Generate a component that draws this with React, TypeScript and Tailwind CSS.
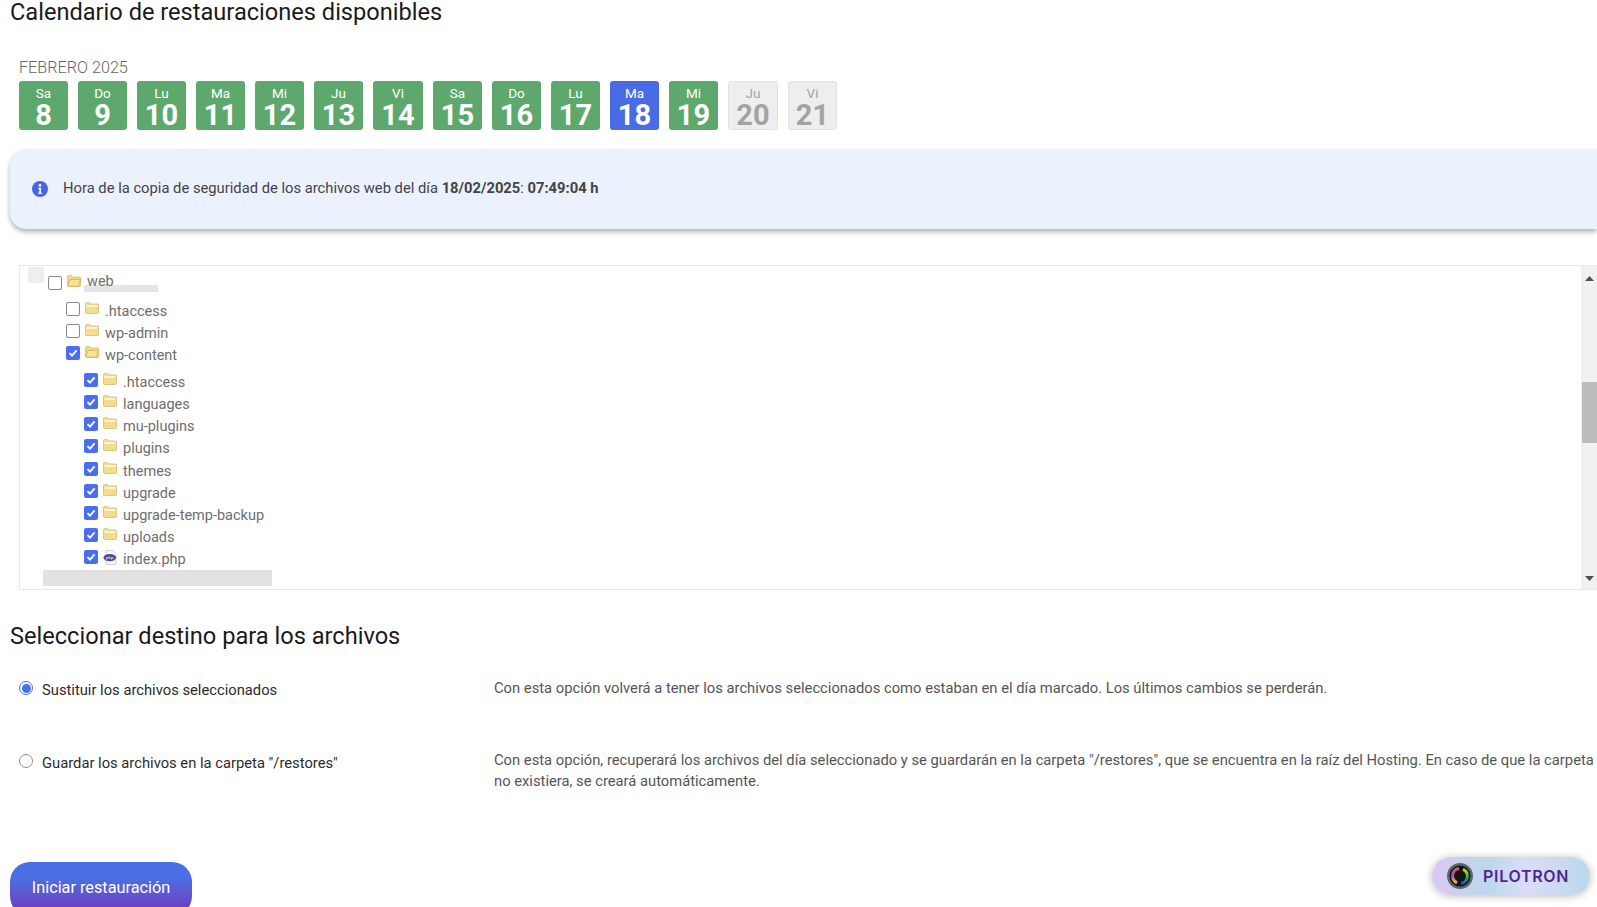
import React from "react";

const days: [string, number, "g" | "b" | "d"][] = [
  ["Sa", 8, "g"], ["Do", 9, "g"], ["Lu", 10, "g"], ["Ma", 11, "g"], ["Mi", 12, "g"], ["Ju", 13, "g"], ["Vi", 14, "g"],
  ["Sa", 15, "g"], ["Do", 16, "g"], ["Lu", 17, "g"], ["Ma", 18, "b"], ["Mi", 19, "g"], ["Ju", 20, "d"], ["Vi", 21, "d"],
];

function Day({ d, n, k, wide }: { d: string; n: number; k: "g" | "b" | "d"; wide?: boolean }) {
  const cls =
    k === "g"
      ? "bg-[#5ea86d] text-white"
      : k === "b"
      ? "bg-[#4a6be6] text-white"
      : "bg-[#eeeeee] text-[#a3a3a3] border border-[#e2e2e2]";
  return (
    <div className={`${wide ? "w-[50px]" : "w-[49px]"} h-[49px] shrink-0 rounded-[3px] flex flex-col items-center ${cls}`}>
      <span className={`text-[13.5px] leading-[15px] ${k === "d" ? "mt-[4px]" : "mt-[5px]"}`}>{d}</span>
      <span className="text-[29px] leading-[29px] font-bold">{n}</span>
    </div>
  );
}

function Folder({ open }: { open?: boolean }) {
  return (
    <svg width="14" height="12" viewBox="0 0 14 12" className="shrink-0">
      <path d="M.5 10.5V1.6c0-.6.4-1 1-1h3.2l1.2 1.4h6.6c.6 0 1 .4 1 1v7.5c0 .6-.4 1-1 1h-11c-.6 0-1-.4-1-1z" fill="#f3dc8c" stroke="#d6bd74" strokeWidth=".8" />
      {open ? (
        <path d="M.8 10.8 3 4.4h10.6l-2.2 6.8H1.4z" fill="#f8e294" stroke="#c9a95a" strokeWidth=".7" />
      ) : (
        <rect x="1.6" y="3.2" width="10.8" height="1.6" fill="#fffbe9" />
      )}
    </svg>
  );
}

function PhpIcon() {
  return (
    <svg width="15" height="15" viewBox="0 0 15 15" className="shrink-0">
      <path d="M3 .5h7l3 3v11H3z" fill="#f7f7fb" stroke="#c9c9d6" strokeWidth=".8" />
      <ellipse cx="6.8" cy="7.6" rx="6.3" ry="3.6" fill="#4f4a8c" />
      <text x="6.8" y="9.2" fontSize="4.4" textAnchor="middle" fill="#ffffff" fontFamily="Roboto, sans-serif">php</text>
    </svg>
  );
}

function Check({ on }: { on?: boolean }) {
  return on ? (
    <span className="w-[14px] h-[14px] shrink-0 rounded-[2px] bg-[#4a6ef0] flex items-center justify-center">
      <svg width="10" height="10" viewBox="0 0 10 10">
        <path d="M1.5 5.2 4 7.6 8.6 2.4" fill="none" stroke="#fff" strokeWidth="1.8" />
      </svg>
    </span>
  ) : (
    <span className="w-[14px] h-[14px] shrink-0 rounded-[2px] bg-white border border-[#8a8a8a]" />
  );
}

function Row({ label, pad, mt, on, icon, open, up }: { label: string; pad: string; mt: string; on?: boolean; icon?: "php"; open?: boolean; up?: boolean }) {
  return (
    <div className={`flex items-start h-[22.15px] ${pad} ${mt}`}>
      <span className={`shrink-0 flex ${up ? "" : "-mt-[1px]"}`}>
        <Check on={on} />
      </span>
      <span className="w-[5px] shrink-0" />
      <span className="w-[14px] shrink-0 -mt-[1px]">{icon === "php" ? <PhpIcon /> : <Folder open={open} />}</span>
      <span className={`ml-[6px] text-[14.5px] leading-[18px] text-[#6e6e6e] ${up ? "-mt-[3px]" : "mt-0"}`}>{label}</span>
    </div>
  );
}

export default function App() {
  return (
    <div className="relative w-[1597px] h-[907px] overflow-hidden bg-white font-['Roboto',sans-serif]">
      <h2 className="pl-[10px] text-[23.6px] leading-[24px] text-[#1a1a1a]">Calendario de restauraciones disponibles</h2>

      <div className="pl-[19px] mt-[34px]">
        <div className="text-[16.2px] leading-[20px] pb-[3px] font-light text-[#666666]">FEBRERO 2025</div>
        <div className="flex gap-x-[10px]">
          {days.map(([d, n, k], i) => (
            <Day key={i} d={d} n={n} k={k} wide={i === 6 || i === 12} />
          ))}
        </div>
      </div>

      <div className="ml-[10px] mt-[19px] h-[80px] rounded-l-[16px] bg-[#ecf2fd] shadow-[0_3px_5px_rgba(0,0,0,0.3)] flex items-center pl-[22px] text-[14.76px] text-[#444444]">
        <svg width="16" height="16" viewBox="0 0 16 16" className="shrink-0">
          <circle cx="8" cy="8" r="8" fill="#4a64e6" />
          <circle cx="8" cy="4.4" r="1.4" fill="#fff" />
          <path d="M6.3 6.8h2.7v5h1.1v1.3H6.1v-1.3h1.2V8.1h-1z" fill="#fff" />
        </svg>
        <span className="ml-[15px] -mt-[2px]">
          Hora de la copia de seguridad de los archivos web del día <b className="font-bold">18/02/2025</b>: <b className="font-bold">07:49:04 h</b>
        </span>
      </div>

      <div className="relative ml-[19px] w-[1579px] mt-[36px] h-[325px] border border-[#e8e8e8] bg-white overflow-hidden flex">
        <div className="flex-1 relative">
          <div className="absolute left-[8px] top-[1px] w-[16px] h-[16px] bg-[#eeeeee]" />
          <div className="absolute left-[64px] top-[19px] w-[74px] h-[7px] bg-[#e5e5e5]" />
          <div className="absolute left-[23px] top-[304px] w-[229px] h-[16px] bg-[#e2e2e2]" />
          <div className="pt-[10px] relative">
            <Row label="web" pad="pl-[28px]" mt="" open up />
            <Row label=".htaccess" pad="pl-[46px]" mt="mt-[5px]" />
            <Row label="wp-admin" pad="pl-[46px]" mt="" />
            <Row label="wp-content" pad="pl-[46px]" mt="" on open />
            <Row label=".htaccess" pad="pl-[64px]" mt="mt-[4.5px]" on />
            <Row label="languages" pad="pl-[64px]" mt="" on />
            <Row label="mu-plugins" pad="pl-[64px]" mt="" on />
            <Row label="plugins" pad="pl-[64px]" mt="" on />
            <Row label="themes" pad="pl-[64px]" mt="" on />
            <Row label="upgrade" pad="pl-[64px]" mt="" on />
            <Row label="upgrade-temp-backup" pad="pl-[64px]" mt="" on />
            <Row label="uploads" pad="pl-[64px]" mt="" on />
            <Row label="index.php" pad="pl-[64px]" mt="" on icon="php" />
          </div>
        </div>
        <div className="w-[16px] bg-[#f1f1f1] flex flex-col items-center justify-between pt-[10px] pb-[8px] relative">
          <svg width="9" height="5" viewBox="0 0 9 5"><path d="M4.5 0 9 5H0z" fill="#505050" /></svg>
          <div className="absolute left-[1px] top-[116px] w-[15px] h-[61px] bg-[#bcbcbc]" />
          <svg width="9" height="5" viewBox="0 0 9 5"><path d="M4.5 5 9 0H0z" fill="#505050" /></svg>
        </div>
      </div>

      <h2 className="pl-[10px] mt-[34px] text-[23.6px] leading-[24px] text-[#1a1a1a]">Seleccionar destino para los archivos</h2>

      <div className="mt-[32px] flex pl-[19px] h-[73px]">
        <div className="w-[475px] flex items-start shrink-0">
          <span className="mt-[1px] w-[14px] h-[14px] rounded-full border border-[#4a6ef0] flex items-center justify-center shrink-0">
            <span className="w-[9px] h-[9px] rounded-full bg-[#4a6ef0]" />
          </span>
          <span className="ml-[9px] text-[14.76px] leading-[21px] text-[#2b2b2b]">Sustituir los archivos seleccionados</span>
        </div>
        <p className="-mt-[2px] text-[14.76px] leading-[21px] text-[#555555]">Con esta opción volverá a tener los archivos seleccionados como estaban en el día marcado. Los últimos cambios se perderán.</p>
      </div>

      <div className="flex pl-[19px]">
        <div className="w-[475px] flex items-start shrink-0">
          <span className="mt-[1px] w-[14px] h-[14px] rounded-full border border-[#8f8f8f] bg-white shrink-0" />
          <span className="ml-[9px] text-[14.76px] leading-[21px] text-[#2b2b2b]">Guardar los archivos en la carpeta "/restores"</span>
        </div>
        <p className="-mt-[3px] w-[1100px] shrink-0 text-[14.76px] leading-[21px] text-[#555555]">
          Con esta opción, recuperará los archivos del día seleccionado y se guardarán en la carpeta "/restores", que se encuentra en la raíz del Hosting. En caso de que la carpeta no existiera, se creará automáticamente.
        </p>
      </div>

      <button className="block ml-[10px] mt-[70px] w-[182px] h-[54px] pb-[3px] rounded-[20px] bg-gradient-to-b from-[#4a6ee4] from-[30%] to-[#6a3fc0] to-[85%] text-white text-[16.25px] leading-[24px] text-center">
        Iniciar restauración
      </button>

      <div className="absolute left-[1432px] top-[857px] w-[158px] h-[38px] rounded-[19px] bg-[linear-gradient(90deg,#dcc8f2_0%,#bcd8ec_35%,#dcdcf6_60%,#b9d9ec_100%)] shadow-[0_1px_8px_rgba(0,0,0,0.28)] flex items-center pl-[15px]">
        <svg width="26" height="26" viewBox="0 0 26 26" className="shrink-0">
          <defs>
            <linearGradient id="ringL" x1="0" y1="0" x2="0" y2="1">
              <stop offset="0" stopColor="#e8554a" />
              <stop offset=".5" stopColor="#9c4fc4" />
              <stop offset="1" stopColor="#e8c62c" />
            </linearGradient>
            <linearGradient id="ringR" x1="0" y1="0" x2="0" y2="1">
              <stop offset="0" stopColor="#e8c62c" />
              <stop offset=".5" stopColor="#36b84e" />
              <stop offset="1" stopColor="#2a4ee0" />
            </linearGradient>
          </defs>
          <circle cx="13" cy="13" r="13" fill="#56686a" />
          <circle cx="13" cy="13" r="10.5" fill="#141414" />
          <path d="M12 5.5a7.5 7.5 0 0 0-2 14.2" fill="none" stroke="url(#ringL)" strokeWidth="3" />
          <path d="M14 20.5a7.5 7.5 0 0 0 2-14.2" fill="none" stroke="url(#ringR)" strokeWidth="3" />
        </svg>
        <span className="ml-[10px] text-[16px] font-semibold tracking-[0.7px] text-[#53248f] font-['Inter',sans-serif]">PILOTRON</span>
      </div>
    </div>
  );
}
